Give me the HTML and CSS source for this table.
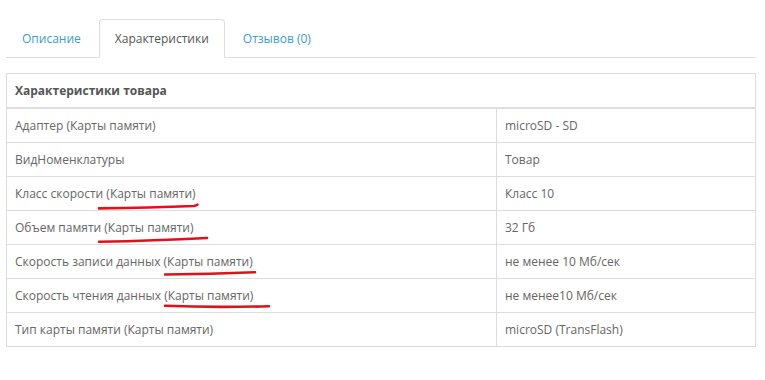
FILE: index.html
```html
<!DOCTYPE html>
<html lang="ru">
<head>
<meta charset="utf-8">
<link rel="stylesheet" href="styles.css">
</head>
<body>
<div class="page">
  <ul class="tabs">
    <li class="tab"><a href="#">Описание</a></li>
    <li class="tab active"><a href="#">Характеристики</a></li>
    <li class="tab"><a href="#">Отзывов (0)</a></li>
  </ul>
  <table class="specs">
    <thead>
      <tr><th colspan="2">Характеристики товара</th></tr>
    </thead>
    <tbody>
      <tr><td class="name">Адаптер (Карты памяти)</td><td>microSD - SD</td></tr>
      <tr><td class="name">ВидНоменклатуры</td><td>Товар</td></tr>
      <tr><td class="name">Класс скорости (Карты памяти)</td><td>Класс 10</td></tr>
      <tr><td class="name">Объем памяти (Карты памяти)</td><td>32 Гб</td></tr>
      <tr><td class="name">Скорость записи данных (Карты памяти)</td><td>не менее 10 Мб/сек</td></tr>
      <tr><td class="name">Скорость чтения данных (Карты памяти)</td><td>не менее10 Мб/сек</td></tr>
      <tr><td class="name">Тип карты памяти (Карты памяти)</td><td>microSD (TransFlash)</td></tr>
    </tbody>
  </table>
  <svg class="marks" width="765" height="380" viewBox="0 0 765 380">
    <path d="M99 208.4 Q150 207.6 194 206 Q196.5 205.6 197.5 204.6"/>
    <path d="M99 241.8 Q155 240.8 207 238"/>
    <path d="M165 274.5 Q210 273.8 255 272.2"/>
    <path d="M165 305.8 Q215 307.8 269 306.2"/>
  </svg>
</div>
</body>
</html>
```

FILE: styles.css
```css
html, body {
  margin: 0;
  padding: 0;
  background: #fff;
}
.page {
  position: relative;
  width: 765px;
  height: 380px;
  padding: 19px 9px 0 6px;
  box-sizing: border-box;
  font-family: "Open Sans", "Liberation Sans", sans-serif;
  font-size: 12px;
  line-height: 17px;
  color: #666;
}
.tabs {
  list-style: none;
  margin: 0;
  padding: 0;
  display: flex;
  border-bottom: 1px solid #ddd;
}
.tab {
  margin-right: 2px;
  margin-bottom: -1px;
}
.tab a {
  display: block;
  padding: 10px 15px;
  font-size: 12px;
  line-height: 17px;
  color: #3a9bd8;
  text-decoration: none;
  border: 1px solid transparent;
  border-radius: 4px 4px 0 0;
}
.tab.active a {
  color: #555;
  background: #fff;
  border-color: #ddd;
  border-bottom-color: #fff;
}
.specs {
  width: 750px;
  margin-top: 15px;
  border-collapse: collapse;
  border: 1px solid #ddd;
}
.specs th, .specs td {
  padding: 8px;
  text-align: left;
  vertical-align: top;
  border: 1px solid #ddd;
}
.specs th {
  font-weight: 700;
  color: #555;
  border-bottom: 2px solid #ddd;
}
.specs td.name {
  width: 473px;
}
.marks {
  position: absolute;
  left: 0;
  top: 0;
  pointer-events: none;
}
.marks path {
  fill: none;
  stroke: #e3101a;
  stroke-width: 2.6;
  stroke-linecap: round;
}
```
